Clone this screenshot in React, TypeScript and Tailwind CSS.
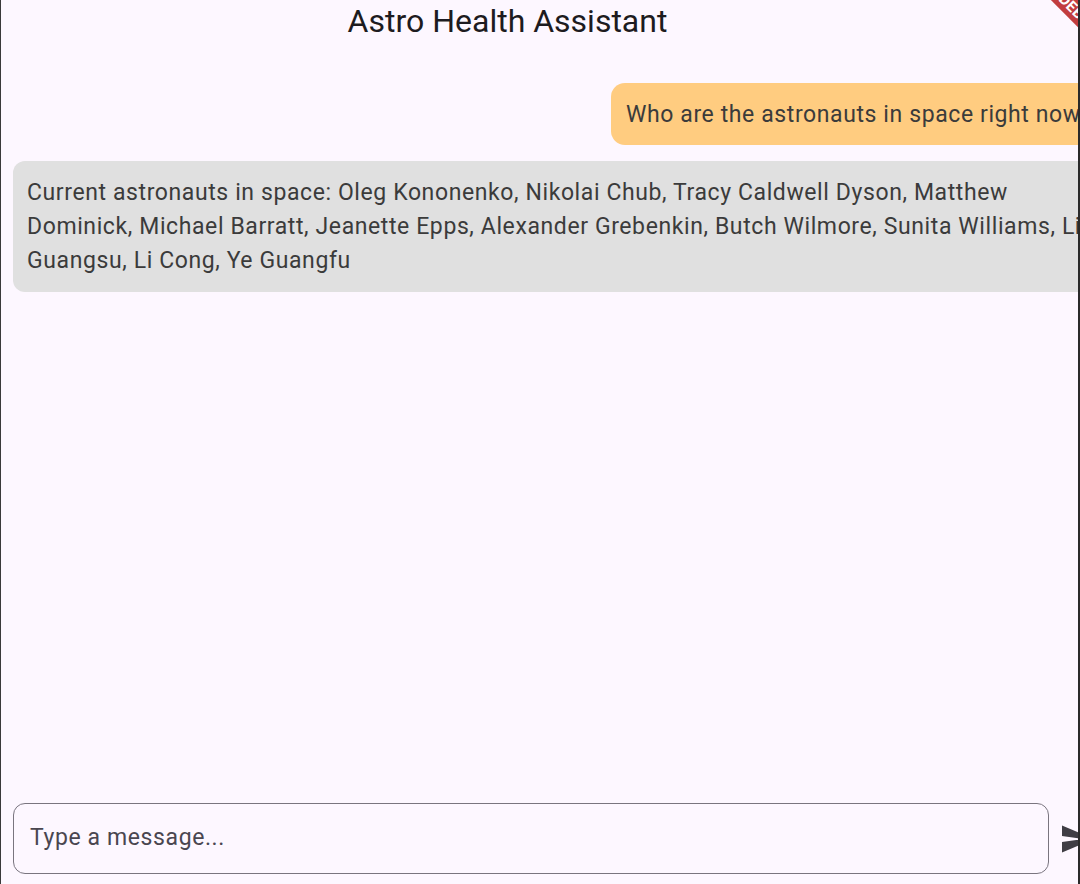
import React from "react";

function SendIcon() {
  return (
    <svg width="36" height="36" viewBox="0 0 24 24" fill="#3f3d44">
      <path d="M2.01 21L23 12 2.01 3 2 10l15 2-15 2z" />
    </svg>
  );
}

export default function App() {
  return (
    <div
      className="relative w-[1080px] h-[884px] overflow-hidden bg-[#fdf7ff] flex flex-col border-l border-l-[#3a3a3a] border-r-2 border-r-[#2a2a2a]"
      style={{ fontFamily: "Roboto, 'Noto Sans', sans-serif" }}
    >
      {/* Debug banner */}
      <div className="absolute top-0 right-0 w-[60px] h-[60px] overflow-hidden pointer-events-none">
        <div className="absolute top-[4px] right-[-66px] w-[130px] h-[20px] rotate-45 bg-[#b71c1c]/85 flex items-center justify-center text-white text-[15px] font-bold tracking-wide">
          DEBUG
        </div>
      </div>

      {/* App bar */}
      <div className="h-[42px] flex items-center justify-center pr-[64px] shrink-0">
        <span className="text-[32px] text-[#1d1b20] leading-none">
          Astro Health Assistant
        </span>
      </div>

      {/* Messages */}
      <div className="flex flex-col pt-[41px]">
        <div className="flex pl-[610px]">
          <div className="shrink-0 whitespace-nowrap h-[62px] flex items-center pl-[15px] pr-[16px] pt-[2px] rounded-[14px] bg-[#ffcc80] text-[23px] tracking-[0.6px] text-[#3b3b3b]">
            Who are the astronauts in space right now?
          </div>
        </div>
        <div className="mt-[16px] ml-[12px] w-[1100px] shrink-0 rounded-[12px] bg-[#e0e0e0] pl-[14px] pt-[15px] pb-[14px] text-[23px] tracking-[0.6px] leading-[34px] text-[#3b3b3b] whitespace-nowrap">
          Current astronauts in space: Oleg Kononenko, Nikolai Chub, Tracy Caldwell Dyson, Matthew
          <br />
          Dominick, Michael Barratt, Jeanette Epps, Alexander Grebenkin, Butch Wilmore, Sunita Williams, Li
          <br />
          Guangsu, Li Cong, Ye Guangfu
        </div>
      </div>

      {/* Input */}
      <div className="mt-auto flex items-center pl-[12px] pb-[10px]">
        <div className="w-[1036px] h-[71px] shrink-0 rounded-[12px] border-[1.5px] border-[#7a757f] flex items-center pl-[16px] text-[23px] tracking-[0.6px] text-[#4a4650]">
          Type a message...
        </div>
        <div className="ml-[10px] shrink-0 flex items-center">
          <SendIcon />
        </div>
      </div>
    </div>
  );
}
